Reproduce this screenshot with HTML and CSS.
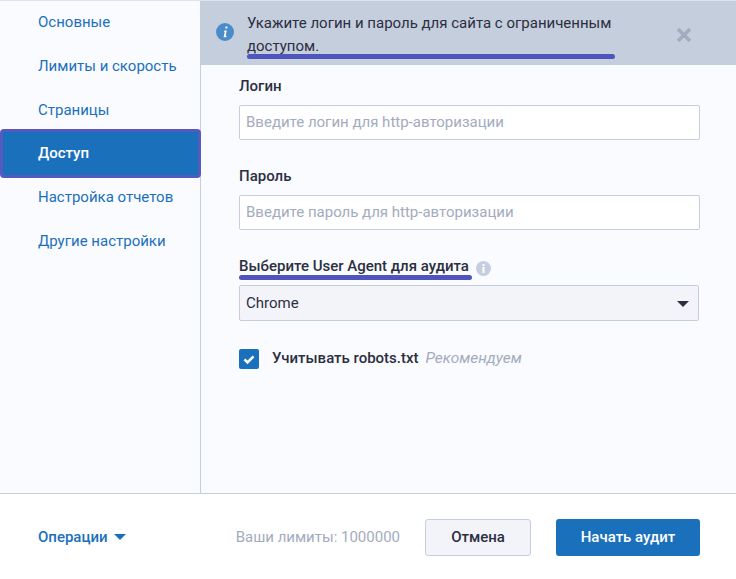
FILE: index.html
```html
<!DOCTYPE html>
<html lang="ru">
<head>
<meta charset="utf-8">
<title>Доступ</title>
<link rel="stylesheet" href="styles.css">
</head>
<body>
<div class="dialog">
  <div class="body">
    <nav class="side">
      <a class="nav-item">Основные</a>
      <a class="nav-item">Лимиты и скорость</a>
      <a class="nav-item">Страницы</a>
      <a class="nav-item active">Доступ</a>
      <a class="nav-item">Настройка отчетов</a>
      <a class="nav-item">Другие настройки</a>
    </nav>
    <main class="main">
      <div class="banner">
        <svg class="info" viewBox="0 0 18 18" width="18" height="18"><circle cx="9" cy="9" r="9" fill="#4a8cca"/><path d="M9.6 3.6h2l-.4 2h-2zM8.4 7.4h2.4l-1.2 5.4h1l-.3 1.4H7.6l1.2-5.4h-.8z" fill="#fff"/></svg>
        <p class="banner-text">Укажите логин и пароль для сайта с ограниченным доступом.<span class="mark mark-banner"></span></p>
        <svg class="close" viewBox="0 0 16 16" width="16" height="16"><path d="M2 2l12 12M14 2L2 14" stroke="#a3abbe" stroke-width="3.6" fill="none"/></svg>
      </div>
      <form class="form">
        <div class="field">
          <label class="label">Логин</label>
          <input class="input" type="text" placeholder="Введите логин для http-авторизации">
        </div>
        <div class="field">
          <label class="label">Пароль</label>
          <input class="input" type="text" placeholder="Введите пароль для http-авторизации">
        </div>
        <div class="field field-select">
          <label class="label-row"><span class="label-text">Выберите User Agent для аудита<span class="mark mark-label"></span></span>
            <svg class="hint" viewBox="0 0 16 16" width="15" height="15"><circle cx="8" cy="8" r="8" fill="#c5cedd"/><path d="M6.900 3.200h2.200v2H6.900zM6.900 6.400h2.200v6.400H6.900z" fill="#fff"/></svg>
          </label>
          <div class="select">Chrome<span class="caret"></span></div>
        </div>
        <div class="check-row">
          <span class="check"><svg viewBox="0 0 20 20" width="20" height="20"><path d="M5.500 10.300l3 3 6-6" stroke="#fff" stroke-width="2.600" fill="none"/></svg></span>
          <span class="check-text">Учитывать robots.txt</span>
          <em class="check-note">Рекомендуем</em>
        </div>
      </form>
    </main>
  </div>
  <footer class="footer">
    <a class="ops">Операции<span class="ops-caret"></span></a>
    <span class="limits">Ваши лимиты: 1000000</span>
    <button class="btn btn-cancel" type="button">Отмена</button>
    <button class="btn btn-start" type="button">Начать аудит</button>
  </footer>
</div>
</body>
</html>
```
FILE: styles.css
```css
* { box-sizing: border-box; }
html, body { margin: 0; height: 100%; }
body { font-family: Roboto, "Noto Sans", sans-serif; font-size: 15px; color: #2b2f3f; background: #fff; }
.dialog { width: 736px; height: 579px; display: flex; flex-direction: column; }
.body { height: 494px; display: flex; background: #fafbff; border-bottom: 1px solid #c5cedd; border-top: 1px solid #dfe4ec; }
.side { width: 201px; flex: none; border-right: 1px solid #c5cedd; display: flex; flex-direction: column; }
.nav-item { height: 44px; line-height: 42px; padding-left: 38px; color: #1b70bc; flex: none; }
.nav-item.active { height: 49px; margin: -4px -1px -2px 0; line-height: 42px; background: #1b70bc; color: #fff; font-weight: 500; border: 3px solid #5659c0; border-radius: 4px; padding-left: 35px; position: relative; z-index: 1; }
.main { flex: 1; min-width: 0; }
.banner { height: 64px; background: #c5cedd; position: relative; display: flex; padding: 11px 0 0 15px; }
.info { margin-top: 11px; flex: none; }
.banner-text { margin: 0 0 0 13px; width: 400px; line-height: 23px; position: relative; height: 46px; }
.close { position: absolute; left: 475px; top: 26px; }
.mark { position: absolute; height: 5px; background: #5055bd; border-radius: 3px; }
.mark-banner { left: 0; top: 42px; width: 368px; }
.form { padding: 13px 36px 0 38px; }
.field { margin-bottom: 28px; }
.label { display: block; font-weight: 500; line-height: 16px; margin-bottom: 11px; }
.input { display: block; width: 461px; height: 35px; border: 1px solid #c5cedd; border-radius: 2px; background: #fff; padding: 0 6px 2px; font: 15px Roboto, sans-serif; color: #2b2f3f; }
.input::placeholder { color: #a3abbe; opacity: 1; }
.field-select { margin-top: 29px; margin-bottom: 0; }
.label-row { display: flex; align-items: flex-start; gap: 7px; height: 18px; margin-bottom: 8px; font-weight: 500; }
.label-text { position: relative; line-height: 14px; }
.mark-label { left: 0; top: 16px; width: 233px; }
.hint { margin-top: 2px; }
.select { position: relative; width: 460px; height: 36px; line-height: 34px; border: 1px solid #c5cedd; border-radius: 2px; background: #f3f4f9; padding: 0 6px; }
.caret { position: absolute; right: 9px; top: 15px; border: 6px solid transparent; border-top: 6px solid #2b2f3f; border-bottom: 0; }
.check-row { display: flex; align-items: center; margin-top: 28px; height: 20px; }
.check { width: 20px; height: 20px; background: #1b70bc; border-radius: 2px; flex: none; display: block; }
.check svg { display: block; }
.check-text { margin-left: 13px; font-weight: 500; padding-bottom: 2px; }
.check-note { margin-left: 7px; color: #a3abbe; font-size: 15.4px; padding-bottom: 2px; }
.footer { flex: 1; display: flex; align-items: center; padding: 1px 36px 0 38px; background: #fff; }
.ops { color: #1b70bc; font-weight: 500; display: flex; align-items: center; }
.ops-caret { margin-left: 6px; border: 6px solid transparent; border-top: 6px solid #1b70bc; border-bottom: 0; }
.limits { margin-left: auto; color: #a3abbe; margin-right: 25px; }
.btn { height: 37px; border-radius: 3px; font: 500 15px Roboto, sans-serif; padding: 0; }
.btn-cancel { width: 106px; background: #f3f4f9; border: 1px solid #c5cedd; color: #2b2f3f; margin-right: 25px; }
.btn-start { width: 144px; background: #1b70bc; border: 0; color: #fff; }
```
